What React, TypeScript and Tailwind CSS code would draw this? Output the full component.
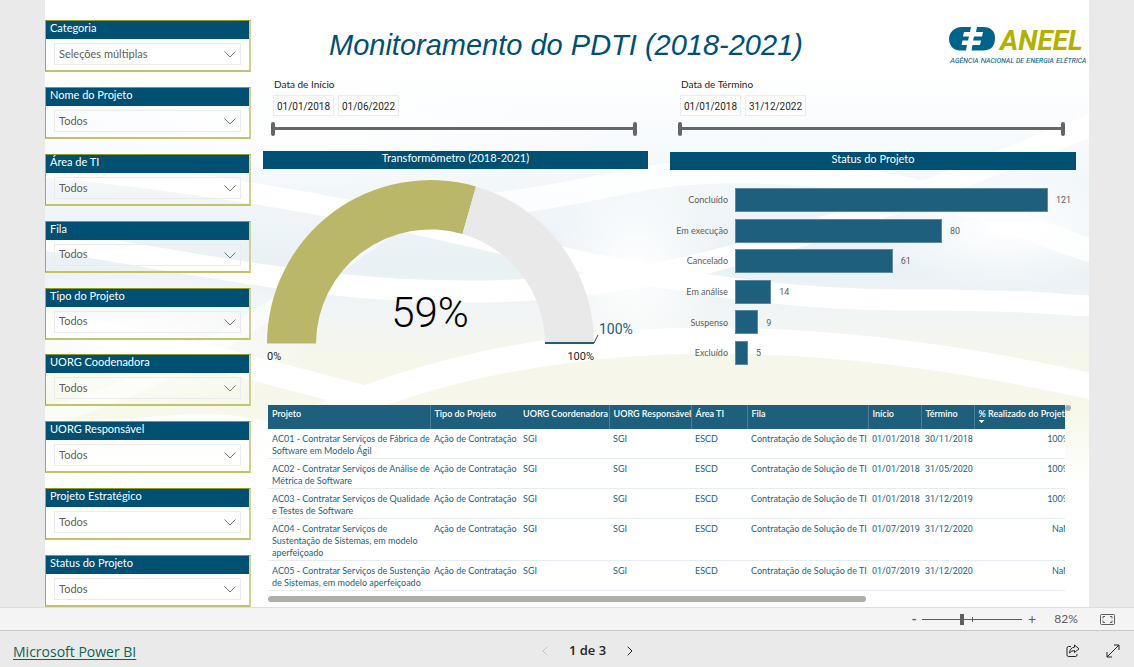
import { ChevronLeft, ChevronRight } from "lucide-react";

const slicers = [
  { label: "Categoria", value: "Seleções múltiplas" },
  { label: "Nome do Projeto", value: "Todos" },
  { label: "Área de TI", value: "Todos" },
  { label: "Fila", value: "Todos" },
  { label: "Tipo do Projeto", value: "Todos" },
  { label: "UORG Coodenadora", value: "Todos" },
  { label: "UORG Responsável", value: "Todos" },
  { label: "Projeto Estratégico", value: "Todos" },
  { label: "Status do Projeto", value: "Todos" },
];

const statusData = [
  { label: "Concluído", value: 121 },
  { label: "Em execução", value: 80 },
  { label: "Cancelado", value: 61 },
  { label: "Em análise", value: 14 },
  { label: "Suspenso", value: 9 },
  { label: "Excluído", value: 5 },
];

const columns = [
  { label: "Projeto", width: "w-[162px] border-r" },
  { label: "Tipo do Projeto", width: "w-[89px]" },
  { label: "UORG Coordenadora", width: "w-[90px] border-r" },
  { label: "UORG Responsável", width: "w-[82px] border-r" },
  { label: "Área TI", width: "w-[56px] border-r" },
  { label: "Fila", width: "w-[121px] border-r" },
  { label: "Início", width: "w-[53px] border-r" },
  { label: "Término", width: "w-[53px] border-r" },
  { label: "% Realizado do Projeto", width: "w-[100px]", sorted: true },
];

const projects = [
  { name: "AC01 - Contratar Serviços de Fábrica de\nSoftware em Modelo Ágil", start: "01/01/2018", end: "30/11/2018", done: "100%" },
  { name: "AC02 - Contratar Serviços de Análise de\nMétrica de Software", start: "01/01/2018", end: "31/05/2020", done: "100%" },
  { name: "AC03 - Contratar Serviços de Qualidade\ne Testes de Software", start: "01/01/2018", end: "31/12/2019", done: "100%" },
  { name: "AC04 - Contratar Serviços de\nSustentação de Sistemas, em modelo\naperfeiçoado", start: "01/07/2019", end: "31/12/2020", done: "NaN" },
  { name: "AC05 - Contratar Serviços de Sustenção\nde Sistemas, em modelo aperfeiçoado", start: "01/07/2019", end: "31/12/2020", done: "NaN" },
];

function Backdrop() {
  return (
    <svg className="absolute inset-0 h-full w-full" viewBox="0 0 1044 607" preserveAspectRatio="none" aria-hidden="true">
      <defs>
        <linearGradient id="sky" x1="0" y1="0" x2="0" y2="1">
          <stop offset="0.12" stopColor="#ffffff" />
          <stop offset="0.26" stopColor="#f5f9fc" />
          <stop offset="0.44" stopColor="#e9f1f5" />
          <stop offset="0.52" stopColor="#f1f5f5" />
          <stop offset="0.6" stopColor="#f6f7ea" />
          <stop offset="0.68" stopColor="#f7f8ea" />
          <stop offset="0.8" stopColor="#ffffff" />
        </linearGradient>
        <radialGradient id="glow">
          <stop offset="0" stopColor="#fff" />
          <stop offset="1" stopColor="#fff" stopOpacity="0" />
        </radialGradient>
      </defs>
      <rect width="1044" height="607" fill="url(#sky)" />
      <ellipse cx="590" cy="270" rx="90" ry="100" fill="url(#glow)" />
      <ellipse cx="80" cy="340" rx="190" ry="80" fill="url(#glow)" />
      <ellipse cx="960" cy="230" rx="140" ry="60" fill="url(#glow)" />
      <ellipse cx="250" cy="130" rx="340" ry="60" fill="url(#glow)" />
      <g fill="none" stroke="#fff">
        <path d="M-10 166C150 180 290 205 420 235S690 300 860 300S1000 306 1054 306" strokeWidth="21" />
        <path d="M-10 238C150 262 300 300 480 290S800 225 1054 122" strokeWidth="22" />
        <path d="M330 215C420 210 480 203 580 182S830 172 930 208S1010 240 1054 253" strokeWidth="24" opacity="0.8" />
        <path d="M270 420C420 350 590 338 700 341S930 360 1054 388" strokeWidth="26" />
        <path d="M-10 322C120 342 220 372 330 400" strokeWidth="24" />
        <path d="M-10 420C130 380 200 330 340 230" strokeWidth="18" opacity="0.5" />
      </g>
      <path d="M0 420C80 430 160 395 250 430V607H0Z" fill="#fff" opacity="0.8" />
    </svg>
  );
}

function Slicer({ label, value }: { label: string; value: string }) {
  const id = label.toLowerCase().replace(/\s/g, "-");
  return (
    <div className="border border-r-2 border-b-2 border-t-[#8f9a2b] border-r-[#d1d08c] border-b-[#c3c268] border-l-[#a9ad35]">
      <label htmlFor={id} className="block h-[18px] bg-[#005073] pl-1 text-[11px] leading-[14px] text-white">
        {label}
      </label>
      <div className="relative mx-2 mt-1 mb-[5px] h-[22px] border border-[#ebebeb]">
        <select id={id} className="block h-full w-full appearance-none p-0 pl-1 text-[11px] text-[#605e5c]">
          <option>{value}</option>
        </select>
        <svg className="pointer-events-none absolute top-[7px] right-1 h-[7px] w-3" viewBox="0 0 12 7" fill="none" stroke="#7a7876" aria-hidden="true">
          <path d="M0.500 0.500L6 6L11.500 0.500" />
        </svg>
      </div>
    </div>
  );
}

const thumb =
  "pointer-events-none absolute inset-0 h-full w-full appearance-none bg-transparent [&::-webkit-slider-thumb]:pointer-events-auto [&::-webkit-slider-thumb]:h-[14px] [&::-webkit-slider-thumb]:w-1 [&::-webkit-slider-thumb]:appearance-none [&::-webkit-slider-thumb]:rounded-sm [&::-webkit-slider-thumb]:bg-[#666666]";

function DateRange({ label, from, to }: { label: string; from: string; to: string }) {
  const box = "h-[21px] w-[61px] border border-[#ececec] bg-white pt-px text-center font-[Roboto,sans-serif] text-[10px] text-[#252423]";
  return (
    <fieldset className="min-w-0 pr-[11px] pl-2">
      <legend className="pl-[3px] text-[10px] leading-[14px] text-[#252423]">{label}</legend>
      <div className="mt-1 flex gap-1 pl-[2px]">
        <input aria-label={label + " de"} defaultValue={from} className={box} />
        <input aria-label={label + " até"} defaultValue={to} className={box} />
      </div>
      <div className="relative mt-[5px] h-[15px]">
        <div className="absolute inset-x-0 top-[6px] h-[3px] bg-[#666666]" />
        <input type="range" aria-label={label + " mínima"} defaultValue={0} className={thumb} />
        <input type="range" aria-label={label + " máxima"} defaultValue={100} className={thumb} />
      </div>
    </fieldset>
  );
}

function Logo() {
  return (
    <svg className="-mr-[11px] h-10 w-[138px] shrink-0" viewBox="0 0 138 40" role="img" aria-label="ANEEL">
      <g fill="#00638c">
        <path d="M13 1H22L21 6H15L14 10.500H20L19 14.500H13.500L12.500 19H18L17 24.500H11C4 24.500 0 19 0 13S5 1 13 1Z" />
        <path d="M28 1H34C42 1 46 5 46 12S43 24.500 34 24.500H22.500L23.500 19H31L32 14.500H24L25 10.500H33L34 6H27Z" />
      </g>
      <text x="51" y="24" fill="#b2b000" fontFamily="Roboto, sans-serif" fontStyle="italic" fontWeight="700" fontSize="28">ANEEL</text>
      <text x="1" y="37" fill="#00638c" fontFamily="Roboto, sans-serif" fontStyle="italic" fontWeight="400" fontVariant="small-caps" fontSize="8">Agência Nacional de Energia Elétrica</text>
    </svg>
  );
}

function Gauge() {
  return (
    <svg className="block w-full" viewBox="0 0 385 196" role="img" aria-label="Transformômetro 59%">
      <path d="M4 174.500A163.500 163.500 0 0 1 213 17.500L199.500 65A114.500 114.500 0 0 0 53 174.500Z" fill="#bbb768" />
      <path d="M213 17.500A163.500 163.500 0 0 1 331 174.500H282A114.500 114.500 0 0 0 199.500 65Z" fill="#e9e9e9" />
      <path d="M282 174H331" stroke="#1d5f7d" strokeWidth="2" />
      <path d="M331 174L335 166" stroke="#444" />
      <g fontFamily="Roboto, sans-serif">
        <text x="167" y="158" textAnchor="middle" fontSize="42" fontWeight="300">59%</text>
        <text x="336" y="165" fontSize="14" fill="#1d5f7d">100%</text>
        <text x="4" y="191" fontSize="11" fill="#252423">0%</text>
        <text x="331" y="191" textAnchor="end" fontSize="11" fill="#252423">100%</text>
      </g>
    </svg>
  );
}

function StatusChart() {
  const max = statusData[0].value;
  return (
    <ul className="mt-[18px] flex h-[177px] flex-col justify-between text-[9px] text-[#605e5c]">
      {statusData.map((s) => (
        <li key={s.label} className="flex h-6 items-center">
          <span className="w-[58px] shrink-0 text-right">{s.label}</span>
          <div className="mr-7 ml-[7px] flex h-full flex-1 items-center">
            <div className="h-full shrink-0 border border-[#5b8ba1] bg-[#1d5f7d]" style={{ width: `${(s.value / max) * 100}%` }} />
            <span className="pt-0.5 pl-2 font-[Roboto,sans-serif]">{s.value}</span>
          </div>
        </li>
      ))}
    </ul>
  );
}

function ProjectTable() {
  return (
    <div className="relative mt-10 mr-[11px] ml-[5px]">
      <div className="overflow-hidden">
        <table className="w-[806px] table-fixed border-collapse bg-white text-left text-[9px] leading-3 text-[#1d5f7d]">
          <thead>
            <tr className="h-6 bg-[#1d5f7d] align-top text-white">
              {columns.map((c) => (
                <th key={c.label} className={`${c.width} border-[#4b8099] pt-[3px] pl-1 font-semibold whitespace-nowrap`}>
                  {c.label}
                  {c.sorted && <span className="block h-[3px] w-1.5 bg-white [clip-path:polygon(0_0,100%_0,50%_100%)]" />}
                </th>
              ))}
            </tr>
          </thead>
          <tbody>
            {projects.map((p) => (
              <tr key={p.name} className="border-b border-[#e6edf0] align-top">
                <td className="pt-1 pb-px pl-1 whitespace-pre">{p.name}</td>
                <td className="pt-1 pl-1 whitespace-nowrap">Ação de Contratação</td>
                <td className="pt-1 pl-1">SGI</td>
                <td className="pt-1 pl-1">SGI</td>
                <td className="pt-1 pl-1">ESCD</td>
                <td className="pt-1 pl-1 whitespace-nowrap">Contratação de Solução de TI</td>
                <td className="pt-1 pl-1 font-[Roboto,sans-serif]">{p.start}</td>
                <td className="pt-1 pl-1 font-[Roboto,sans-serif]">{p.end}</td>
                <td className="pt-1 pr-1 text-right">{p.done}</td>
              </tr>
            ))}
          </tbody>
        </table>
      </div>
      <div className="absolute top-0 -right-[6px] h-1.5 w-1.5 rounded-full bg-[#b0aeab]" />
      <div className="mt-[5px] h-1.5 w-3/4 rounded-full bg-[#b0aeab]" />
    </div>
  );
}

export default function App() {
  return (
    <div className="flex min-h-screen flex-col bg-[#eaeaea] font-[Lato,sans-serif]">
      <main className="relative mx-[45px] flex flex-1 overflow-hidden bg-white">
        <Backdrop />
        <aside className="relative flex w-[206px] shrink-0 flex-col justify-between pt-5">
          {slicers.map((s) => (
            <Slicer key={s.label} {...s} />
          ))}
        </aside>

        <section className="relative min-w-0 flex-1 pr-[13px] pb-1 pl-3">
          <header className="flex h-[77px] items-start justify-between pt-[26px] pl-[66px]">
            <h1 className="font-['Liberation_Sans',sans-serif] text-[29px] leading-[38px] text-[#005073] italic">Monitoramento do PDTI (2018-2021)</h1>
            <Logo />
          </header>
          <div className="grid grid-cols-[385fr_406fr] gap-x-[22px]">
            <div>
              <DateRange label="Data de Início" from="01/01/2018" to="01/06/2022" />
              <h2 className="mt-[15px] h-[18px] bg-[#005073] text-center text-[11px] leading-[14px] text-white">Transformômetro (2018-2021)</h2>
              <Gauge />
            </div>
            <div>
              <DateRange label="Data de Término" from="01/01/2018" to="31/12/2022" />
              <h2 className="mt-4 h-[18px] bg-[#005073] text-center text-[11px] leading-[14px] text-white">Status do Projeto</h2>
              <StatusChart />
            </div>
          </div>
          <ProjectTable />
        </section>
      </main>

      <div className="flex h-6 items-center justify-end border-t border-b border-t-[#dedede] border-b-[#c8c6c4] bg-[#f4f4f4] pr-[19px] text-[#605e5c]">
        <button aria-label="Reduzir" className="w-3 text-sm leading-5 font-bold">-</button>
        <div className="relative mx-[2px] h-3 w-[100px]">
          <div className="absolute inset-x-0 top-[6px] h-px bg-[#605e5c]" />
          <div className="absolute top-1 left-1/2 h-[5px] w-px bg-[#605e5c]" />
          <input
            type="range"
            aria-label="Zoom"
            defaultValue={40}
            className="absolute inset-0 h-full w-full appearance-none bg-transparent [&::-webkit-slider-thumb]:h-[11px] [&::-webkit-slider-thumb]:w-1 [&::-webkit-slider-thumb]:appearance-none [&::-webkit-slider-thumb]:bg-[#605e5c]"
          />
        </div>
        <button aria-label="Ampliar" className="w-4 text-sm leading-5">+</button>
        <span className="w-[52px] text-center text-xs">82%</span>
        <button aria-label="Ajustar à página" className="ml-2">
          <svg className="h-[11px] w-[15px]" viewBox="0 0 15 11" fill="none" stroke="#605e5c">
            <rect x="0.500" y="0.500" width="14" height="10" rx="1" />
            <path d="M3 4.500V2.500H5M10 2.500H12V4.500M12 6.500V8.500H10M5 8.500H3V6.500" />
          </svg>
        </button>
      </div>

      <footer className="grid h-9 grid-cols-[1fr_auto_1fr] items-center pt-1 pr-[14px] pl-[13px] font-['Open_Sans',sans-serif]">
        <a href="#" className="justify-self-start text-[14px] text-[#0f6156] underline underline-offset-2">Microsoft Power BI</a>
        <nav className="flex items-center gap-4 pl-[42px] text-[13px] font-semibold text-[#252423]">
          <button aria-label="Página anterior" className="text-[#c8c6c4]">
            <ChevronLeft className="h-4 w-4" strokeWidth={1.5} />
          </button>
          <span>1 de 3</span>
          <button aria-label="Próxima página">
            <ChevronRight className="h-4 w-4" strokeWidth={1.5} />
          </button>
        </nav>
        <div className="flex items-center gap-[26px] justify-self-end text-[#252423]">
          <button aria-label="Compartilhar">
            <svg className="h-[14px] w-[14px]" viewBox="0 0 14 14" fill="none" stroke="currentColor" strokeLinejoin="round">
              <path d="M5 2.500H2.500Q1 2.500 1 4V11Q1 12.500 2.500 12.500H9.500Q11 12.500 11 11V10" />
              <path d="M8.500 1L13 4.800L8.500 8.500V6.500Q5.500 6.500 3.500 9Q4 3.500 8.500 3.200Z" />
            </svg>
          </button>
          <button aria-label="Tela inteira">
            <svg className="h-[14px] w-[14px]" viewBox="0 0 14 14" fill="none" stroke="currentColor">
              <path d="M1 13L13 1M8 1H13V6M1 8V13H6" />
            </svg>
          </button>
        </div>
      </footer>
    </div>
  );
}
